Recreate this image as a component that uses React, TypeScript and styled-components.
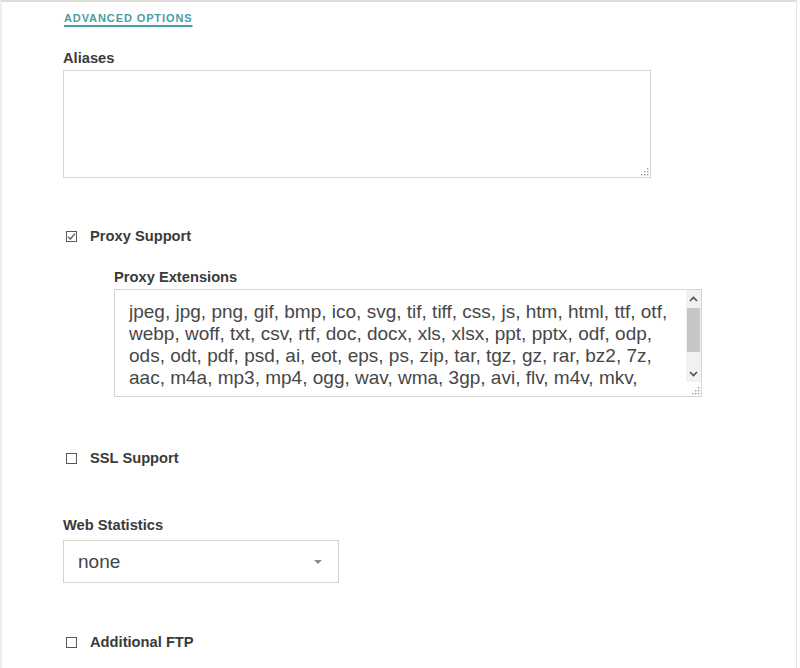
import React from "react";
import styled, { createGlobalStyle } from "styled-components";

const GlobalStyle = createGlobalStyle`
  html, body {
    margin: 0;
    padding: 0;
    background: #fff;
  }
  body {
    font-family: "Liberation Sans", Arial, sans-serif;
    color: #333;
  }
`;

const EXTENSIONS =
  "jpeg, jpg, png, gif, bmp, ico, svg, tif, tiff, css, js, htm, html, ttf, otf, webp, woff, txt, csv, rtf, doc, docx, xls, xlsx, ppt, pptx, odf, odp, ods, odt, pdf, psd, ai, eot, eps, ps, zip, tar, tgz, gz, rar, bz2, 7z, aac, m4a, mp3, mp4, ogg, wav, wma, 3gp, avi, flv, m4v, mkv, mov, mpeg, mpg, wmv, exe, iso, dmg, swf";

const Page = styled.div`
  width: 797px;
  min-height: 668px;
  box-sizing: border-box;
  border-top: 2px solid #dcdcdc;
  border-left: 2px solid #eeeeee;
  border-right: 1px solid #e6e6e6;
  padding: 6px 0 0 61px;
`;

const AdvancedLink = styled.a`
  display: inline-block;
  font-size: 11px;
  font-weight: bold;
  letter-spacing: 0.9px;
  line-height: 14px;
  color: #4a9ea4;
  text-decoration: underline;
  text-underline-offset: 3px;
  text-decoration-thickness: 1.5px;
  margin-left: 1px;
  cursor: pointer;
`;

const Field = styled.div<{ $indent?: number; $top: number }>`
  margin-top: ${({ $top }) => $top}px;
  padding-left: ${({ $indent }) => $indent ?? 0}px;
`;

const Label = styled.label<{ $gap?: number }>`
  display: block;
  font-size: 14.7px;
  font-weight: bold;
  line-height: 16px;
  color: #3a3a3a;
  margin-bottom: ${({ $gap }) => $gap ?? 4}px;
`;

/* the frame carries border and padding so the textarea clips at exactly four lines */
const AreaFrame = styled.div<{ $scroll?: boolean }>`
  position: relative;
  width: 588px;
  height: 108px;
  box-sizing: border-box;
  border: 1px solid #d4d4d4;
  padding: ${({ $scroll }) => ($scroll ? "11px 20px 7px 14px" : "11px 14px 7px")};
  background: #fff;
`;

const TextArea = styled.textarea`
  display: block;
  width: 100%;
  height: 88px;
  box-sizing: border-box;
  border: none;
  padding: 0;
  margin: 0;
  font-family: "Liberation Sans", Arial, sans-serif;
  font-size: 19px;
  line-height: 22px;
  color: #474747;
  resize: none;
  outline: none;
  overflow: hidden;
  background: transparent;
`;

const ScrollBar = styled.div`
  position: absolute;
  top: 0;
  right: 0;
  bottom: 14px;
  width: 15px;
  display: flex;
  flex-direction: column;
  background: #f1f1f1;
`;

const ScrollButton = styled.div`
  height: 17px;
  display: flex;
  align-items: center;
  justify-content: center;
  flex-shrink: 0;
`;

const Track = styled.div`
  flex: 1;
`;

const Thumb = styled.div`
  height: 44px;
  margin: 1px 1px 0;
  background: #c6c6c6;
`;

const Grip = styled.svg`
  position: absolute;
  right: 1px;
  bottom: 1px;
  pointer-events: none;
`;

const CheckRow = styled.label`
  display: flex;
  align-items: center;
  gap: 13px;
  height: 20px;
  padding-left: 3px;
  font-size: 14.7px;
  font-weight: bold;
  color: #3a3a3a;
  cursor: pointer;
`;

const Box = styled.span`
  display: inline-flex;
  align-items: center;
  justify-content: center;
  width: 11px;
  height: 11px;
  box-sizing: border-box;
  border: 1px solid #5a5a5a;
  background: #fff;
`;

const SelectWrap = styled.div`
  position: relative;
  width: 276px;

  &::after {
    content: "";
    position: absolute;
    right: 17px;
    top: 20px;
    border-left: 4.5px solid transparent;
    border-right: 4.5px solid transparent;
    border-top: 4.5px solid #8c8c8c;
    pointer-events: none;
  }
`;

const Select = styled.select`
  display: block;
  width: 100%;
  height: 43px;
  box-sizing: border-box;
  appearance: none;
  border: 1px solid #d4d4d4;
  border-radius: 0;
  background: #fff;
  padding: 0 14px;
  font-family: "Liberation Sans", Arial, sans-serif;
  font-size: 19px;
  color: #444;
  outline: none;
`;

function Chevron({ up }: { up?: boolean }) {
  return (
    <svg width="9" height="6" viewBox="0 0 9 6">
      <path
        d={up ? "M1 5 L4.5 1.5 L8 5" : "M1 1 L4.5 4.5 L8 1"}
        fill="none"
        stroke="#505050"
        strokeWidth="1.6"
      />
    </svg>
  );
}

function ResizeGrip() {
  const dots = [
    [7, 1],
    [4, 4],
    [7, 4],
    [1, 7],
    [4, 7],
    [7, 7],
  ];
  return (
    <Grip width="9" height="9" viewBox="0 0 9 9">
      {dots.map(([x, y]) => (
        <rect key={`${x}-${y}`} x={x} y={y} width="1.4" height="1.4" fill="#9a9a9a" />
      ))}
    </Grip>
  );
}

function Area({ value, scroll }: { value: string; scroll?: boolean }) {
  return (
    <AreaFrame $scroll={scroll}>
      <TextArea defaultValue={value} />
      {scroll && (
        <ScrollBar>
          <ScrollButton>
            <Chevron up />
          </ScrollButton>
          <Track>
            <Thumb />
          </Track>
          <ScrollButton>
            <Chevron />
          </ScrollButton>
        </ScrollBar>
      )}
      <ResizeGrip />
    </AreaFrame>
  );
}

function Checkbox({ label, checked }: { label: string; checked?: boolean }) {
  return (
    <CheckRow>
      <Box>
        {checked && (
          <svg width="9" height="9" viewBox="0 0 9 9">
            <path
              d="M1 4.6 L3.4 7 L8 1.6"
              fill="none"
              stroke="#555"
              strokeWidth="1.3"
            />
          </svg>
        )}
      </Box>
      {label}
    </CheckRow>
  );
}

export default function App() {
  return (
    <>
      <GlobalStyle />
      <Page>
        <AdvancedLink>ADVANCED OPTIONS</AdvancedLink>

        <Field $top={24}>
          <Label>Aliases</Label>
          <Area value="" />
        </Field>

        <Field $top={48}>
          <Checkbox label="Proxy Support" checked />
        </Field>

        <Field $top={23} $indent={51}>
          <Label>Proxy Extensions</Label>
          <Area value={EXTENSIONS} scroll />
        </Field>

        <Field $top={51}>
          <Checkbox label="SSL Support" />
        </Field>

        <Field $top={49}>
          <Label $gap={7}>Web Statistics</Label>
          <SelectWrap>
            <Select defaultValue="none">
              <option value="none">none</option>
              <option value="awstats">awstats</option>
              <option value="webalizer">webalizer</option>
            </Select>
          </SelectWrap>
        </Field>

        <Field $top={49}>
          <Checkbox label="Additional FTP" />
        </Field>
      </Page>
    </>
  );
}
